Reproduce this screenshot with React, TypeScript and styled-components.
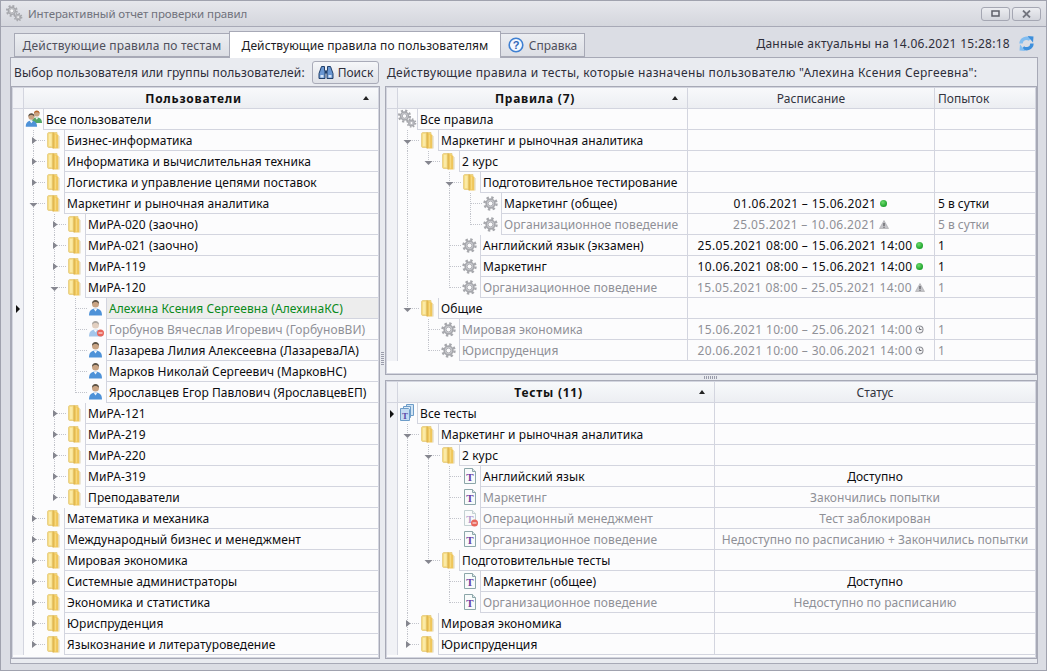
import React from "react";
import styled, { createGlobalStyle } from "styled-components";

const Global = createGlobalStyle`
  html, body { margin: 0; padding: 0; background: #d9dbe2; }
  body { font-family: "Noto Sans", "Liberation Sans", sans-serif; font-size: 12px; }
  * { box-sizing: border-box; }
`;

const LINE = "#d3d5df";
const EDGE = "#a7a9b6";

const Window = styled.div`
  width: 1047px; height: 671px; display: flex; flex-direction: column;
  background: #dbdde4; border: 1px solid #a0a2ae; overflow: hidden;
`;
const TitleBar = styled.div`
  height: 26px; flex: none; display: flex; align-items: center; padding: 0 5px 0 5px;
  background: linear-gradient(#e6e7ec, #d4d6dd); border-bottom: 1px solid #a7a9b6;
`;
const TitleText = styled.div`margin-left: 5px; color: #70727c; flex: 1; white-space: nowrap; font-size: 11.5px; letter-spacing: -0.1px;`;
const WinButton = styled.div`
  width: 29px; height: 14px; margin-left: 2px; display: flex; align-items: center; justify-content: center;
  border: 1px solid #a5a7b3; border-radius: 3px; background: linear-gradient(#ecedf1, #d3d5dc);
`;
const Body = styled.div`flex: 1; display: flex; flex-direction: column; padding: 0 8px 6px 9px; min-height: 0;`;
const TabRow = styled.div`height: 30px; flex: none; display: flex; align-items: flex-end; padding-left: 4px; position: relative; z-index: 1;`;
const Tab = styled.div<{ $active?: boolean; $w: number; $ls: number }>`
  width: ${p => p.$w}px; height: ${p => (p.$active ? 27 : 24)}px; letter-spacing: ${p => p.$ls}px;
  margin-bottom: ${p => (p.$active ? -1 : 0)}px; margin-left: ${p => (p.$active ? -1 : 0)}px;
  display: flex; align-items: center; justify-content: center; gap: 5px; white-space: nowrap;
  color: ${p => (p.$active ? "#1c1c24" : "#4f505c")};
  border: 1px solid ${EDGE}; border-bottom: ${p => (p.$active ? "none" : `1px solid ${EDGE}`)};
  border-left: ${p => (p.$active || p.$w > 100 ? `1px solid ${EDGE}` : "none")};
  background: ${p => (p.$active ? "#fff" : "linear-gradient(#eceef2, #dcdee4)")};
`;
const Fresh = styled.div`margin-left: auto; display: flex; align-items: center; gap: 9px; height: 28px; padding-right: 4px; color: #2e2e3a; white-space: nowrap; letter-spacing: 0.28px;`;
const Panel = styled.div`
  flex: 1; min-height: 0; display: flex; border: 1px solid ${EDGE};
  background: #e9ebf0; padding-bottom: 4px;
`;
const Column = styled.div<{ $w: number }>`width: ${p => p.$w}px; flex: none; display: flex; flex-direction: column; min-height: 0;`;
const VSplit = styled.div`width: 5px; flex: none; display: flex; align-items: center; justify-content: center;`;
const VGrip = styled.div`width: 3px; height: 14px; background: repeating-linear-gradient(#9a9caa 0 1px, transparent 1px 2px);`;
const HSplit = styled.div`height: 5px; flex: none; display: flex; align-items: center; justify-content: center;`;
const HGrip = styled.div`width: 14px; height: 3px; background: repeating-linear-gradient(90deg, #9a9caa 0 1px, transparent 1px 2px);`;
const LabelRow = styled.div`height: 28px; flex: none; display: flex; align-items: center; padding-left: 3px; color: #2e2e3a; white-space: nowrap; letter-spacing: 0.11px;`;
const RightLabel = styled(LabelRow)`padding-left: 2px; letter-spacing: 0.34px;`;
const SearchButton = styled.div`
  width: 67px; height: 23px; margin-left: auto; margin-right: 1px; margin-top: 1px; display: flex; align-items: center; justify-content: center; gap: 4px;
  border: 1px solid #a9abb8; border-radius: 3px; background: linear-gradient(#f6f7f9, #dfe1e7); color: #2e2e3a; letter-spacing: 0;
`;
const Grid = styled.div<{ $h?: number }>`
  ${p => (p.$h ? `height: ${p.$h}px; flex: none;` : "flex: 1;")} min-height: 0;
  border: 1px solid ${EDGE}; display: flex;
`;
const GridInner = styled.div`flex: 1; min-width: 0; border: 1px solid ${LINE}; background: #fcfcfd; display: flex; flex-direction: column; overflow: hidden;`;
const HeaderRow = styled.div`height: 21px; flex: none; display: flex; background: linear-gradient(#f8f9fb, #eceef2); border-bottom: 1px solid ${LINE};`;
const Indicator = styled.div`
  width: 11px; flex: none; display: flex; align-items: center; justify-content: center;
  background: #f1f2f6; border-right: 1px solid ${LINE};
`;
const RowMark = styled.div`width: 0; height: 0; border-left: 4px solid #111; border-top: 4px solid transparent; border-bottom: 4px solid transparent;`;
const HeaderMain = styled.div`flex: 1; min-width: 0; display: flex; align-items: center; padding-right: 9px; font-weight: 700; color: #111; letter-spacing: 0.75px;`;
const HeaderTitle = styled.div`flex: 1; text-align: center;`;
const SortMark = styled.div`width: 0; height: 0; border-left: 3.5px solid transparent; border-right: 3.5px solid transparent; border-bottom: 4px solid #222;`;
const HeaderCol = styled.div<{ $w: number; $left?: boolean }>`
  width: ${p => p.$w}px; flex: none; border-left: 1px solid ${LINE}; display: flex; align-items: center;
  justify-content: ${p => (p.$left ? "flex-start" : "center")}; padding-left: ${p => (p.$left ? 3 : 0)}px; color: #33343f;
`;
const Row = styled.div`height: 21px; flex: none; display: flex;`;
const Gutter = styled.svg`flex: none; display: block;`;
const MainCell = styled.div<{ $tone?: string; $selected?: boolean }>`
  flex: 1; min-width: 0; display: flex; align-items: center; padding-left: 2px; white-space: nowrap; letter-spacing: 0.08px;
  border-left: 1px solid ${LINE}; border-bottom: 1px solid ${LINE};
  background: ${p => (p.$selected ? "#ededed" : "transparent")};
  color: ${p => (p.$tone === "dim" ? "#8f9097" : p.$tone === "green" ? "#0a8a1a" : "#0c0c10")};
`;
const ExtraCell = styled.div<{ $w: number; $left?: boolean; $dim?: boolean; $ls?: number }>`
  width: ${p => p.$w}px; flex: none; display: flex; align-items: center; gap: 3px; white-space: nowrap;
  letter-spacing: ${p => p.$ls ?? 0}px;
  justify-content: ${p => (p.$left ? "flex-start" : "center")}; padding-left: ${p => (p.$left ? 3 : 0)}px;
  border-left: 1px solid ${LINE}; border-bottom: 1px solid ${LINE};
  color: ${p => (p.$dim ? "#8f9097" : "#0c0c10")};
`;

/* ---------- icons ---------- */
const Folder = () => (
  <g>
    <path d="M2.500 4q0-1.500 1.500-1.500h8v15H4q-1.500 0-1.500-1.500z" fill="#f6dc84" stroke="#e4ca7c" strokeWidth=".8" />
    <path d="M4 4h2.500v12H4z" fill="#fbeaa6" />
    <path d="M8 2.500l5.500 2.500v13.500H8z" fill="#efc65c" />
    <path d="M8 2.500v16" stroke="#d4a843" strokeWidth=".9" />
    <path d="M10.500 4.500v13" stroke="#f7d97e" strokeWidth="1.200" />
    <path d="M14 6v12.500" stroke="#ddd2b2" />
  </g>
);
const PersonShape = ({ hair = "#5c5347", body = "#4e92d8" }: { hair?: string; body?: string }) => (
  <g>
    <path d="M2 17.500c0-5 2.500-7 6.500-7s6.500 2 6.500 7z" fill={body} />
    <path d="M6.500 10.500l2 3 2-3z" fill="#f2f6fb" />
    <circle cx="8.500" cy="6" r="3.500" fill="#c9a484" />
    <path d="M5 6c0-3 1.500-4 3.500-4S12 3 12 6c-1-1.500-2-2-3.500-2S6 4.500 5 6z" fill={hair} />
  </g>
);
const Person = () => <PersonShape />;
const Blocked = () => (
  <g>
    <g opacity="0.5"><PersonShape /></g>
    <circle cx="13.500" cy="14" r="3.500" fill="#e8665c" />
    <path d="M11.500 13.500h4v1h-4z" fill="#fff" />
  </g>
);
const Group = () => (
  <g>
    <g transform="translate(6 0) scale(.8)"><PersonShape hair="#b4672c" body="#54a868" /></g>
    <g transform="translate(0 2.500) scale(.87)"><PersonShape /></g>
  </g>
);
const GearAt = ({ x, y, r, color = "#a6a7ac" }: { x: number; y: number; r: number; color?: string }) => {
  const c = 2 * Math.PI * r;
  return (
    <g>
      <circle cx={x} cy={y} r={r} fill="none" stroke={color} strokeWidth={r * 0.4} strokeDasharray={`${c / 16} ${c / 16}`} />
      <circle cx={x} cy={y} r={r * 0.72} fill="#cfd0d4" stroke={color} strokeWidth={r * 0.28} />
      <circle cx={x} cy={y} r={r * 0.4} fill="#fafafb" stroke="#96979d" strokeWidth="0.7" />
    </g>
  );
};
const Gear = () => <GearAt x={8.500} y={10.500} r={6} />;
const Gears = () => (
  <g>
    <GearAt x={6.500} y={7} r={5.500} />
    <GearAt x={13.500} y={14} r={4} />
  </g>
);
const Doc = ({ faded }: { faded?: boolean }) => (
  <g opacity={faded ? 0.5 : 1}>
    <path d="M3.500 2.500h8l3 3v12h-11z" fill="#f8fbfb" stroke="#8ca6a9" />
    <path d="M11.500 2.500v3h3" fill="#dde8ea" stroke="#8ca6a9" />
    <text x="9" y="14.500" textAnchor="middle" fontFamily="Liberation Serif, serif" fontWeight="700" fontSize="11" fill="#6a3fa3">T</text>
  </g>
);
const DocBlocked = () => (
  <g>
    <Doc faded />
    <circle cx="13.500" cy="15" r="3.500" fill="#e8665c" />
    <path d="M11.500 14.500h4v1h-4z" fill="#fff" />
  </g>
);
const Docs = () => (
  <g>
    <path d="M8.500 1.500h7v11h-7z" fill="#cfe3f4" stroke="#6d9cc8" />
    <path d="M5.500 3.500h7v11h-7z" fill="#dcebf7" stroke="#6d9cc8" />
    <path d="M2.500 5.500h8l1 1v11h-9z" fill="#c4dcf2" stroke="#6d9cc8" />
    <text x="7" y="15.500" textAnchor="middle" fontFamily="Liberation Serif, serif" fontWeight="700" fontSize="9" fill="#5a4aa8">T</text>
  </g>
);
const icons = { folder: Folder, person: Person, blocked: Blocked, group: Group, gear: Gear, gears: Gears, doc: () => <Doc />, docBlocked: DocBlocked, docs: Docs };
type IconName = keyof typeof icons;

const DotSvg = styled.svg`flex: none; display: block;`;
const StatusDot = () => (
  <DotSvg width="9" height="9" viewBox="0 0 9 9">
    <defs><radialGradient id="gd" cx=".4" cy=".35" r=".7"><stop offset="0" stopColor="#6fdc6f" /><stop offset="1" stopColor="#129a22" /></radialGradient></defs>
    <circle cx="4.500" cy="4.500" r="3.500" fill="url(#gd)" />
  </DotSvg>
);
const StatusWarn = () => (
  <DotSvg width="10" height="9" viewBox="0 0 10 9">
    <path d="M5 0.500L9.500 8.500H.5z" fill="#c4c4c8" stroke="#a4a4a9" strokeWidth=".6" />
    <path d="M4.500 3h1v3h-1zM4.500 6.800h1v1h-1z" fill="#3f3f44" />
  </DotSvg>
);
const StatusClock = () => (
  <DotSvg width="9" height="9" viewBox="0 0 9 9">
    <circle cx="4.500" cy="4.500" r="3.500" fill="#f4f4f5" stroke="#8f9096" strokeWidth="1.100" />
    <path d="M4.500 2.500v2h2" fill="none" stroke="#66676d" />
  </DotSvg>
);

/* ---------- tree ---------- */
type Status = "ok" | "warn" | "clock";
type TNode = {
  t: string; i: IconName; tone?: "dim" | "green"; closed?: boolean; mark?: boolean; selected?: boolean;
  sched?: string; st?: Status; tries?: string; status?: string; kids?: TNode[];
};
type Flat = { n: TNode; level: number; cont: boolean[]; hasNext: boolean };

function flatten(nodes: TNode[], level: number, cont: boolean[], out: Flat[] = []): Flat[] {
  nodes.forEach((n, idx) => {
    const hasNext = idx < nodes.length - 1;
    out.push({ n, level, cont, hasNext });
    if (n.kids) flatten(n.kids, level + 1, [...cont, level > 0 && hasNext], out);
  });
  return out;
}

const DOTS = "#c2c4cb";
function TreeGutter({ f }: { f: Flat }) {
  const { n, level, cont, hasNext } = f;
  const w = 19 + 21 * level;
  const Icon = icons[n.i];
  const x = 9.5 + 21 * (level - 1);
  const expandable = !!n.kids || n.closed;
  return (
    <Gutter width={w} height={21} viewBox={`0 0 ${w} 21`}>
      {cont.map((c, i) => c && i > 0 ? (
        <path key={i} d={`M${9.5 + 21 * (i - 1)} 0V21`} stroke={DOTS} strokeDasharray="1 1" fill="none" shapeRendering="crispEdges" />
      ) : null)}
      {level > 0 && (
        <g shapeRendering="crispEdges" fill="none" stroke={DOTS} strokeDasharray="1 1">
          <path d={`M${x} 0V${hasNext ? 21 : 10.5}`} />
          <path d={`M${x} 10.5H${x + 12}`} />
        </g>
      )}
      {level > 0 && expandable && (n.closed
        ? <path d={`M${x - 1.500} 7l4.500 3.500-4.500 3.500z`} fill="#85868f" />
        : <path d={`M${x - 4} 10h8l-4 4z`} fill="#85868f" />)}
      <g transform={`translate(${21 * level} 0)`}><Icon /></g>
    </Gutter>
  );
}

const statusIcon = (s?: Status) => s === "ok" ? <StatusDot /> : s === "warn" ? <StatusWarn /> : s === "clock" ? <StatusClock /> : null;

const usersTree: TNode[] = [{
  t: "Все пользователи", i: "group", kids: [
    { t: "Бизнес-информатика", i: "folder", closed: true },
    { t: "Информатика и вычислительная техника", i: "folder", closed: true },
    { t: "Логистика и управление цепями поставок", i: "folder", closed: true },
    { t: "Маркетинг и рыночная аналитика", i: "folder", kids: [
      { t: "МиРА-020 (заочно)", i: "folder", closed: true },
      { t: "МиРА-021 (заочно)", i: "folder", closed: true },
      { t: "МиРА-119", i: "folder", closed: true },
      { t: "МиРА-120", i: "folder", kids: [
        { t: "Алехина Ксения Сергеевна (АлехинаКС)", i: "person", tone: "green", mark: true, selected: true },
        { t: "Горбунов Вячеслав Игоревич (ГорбуновВИ)", i: "blocked", tone: "dim" },
        { t: "Лазарева Лилия Алексеевна (ЛазареваЛА)", i: "person" },
        { t: "Марков Николай Сергеевич (МарковНС)", i: "person" },
        { t: "Ярославцев Егор Павлович (ЯрославцевЕП)", i: "person" },
      ] },
      { t: "МиРА-121", i: "folder", closed: true },
      { t: "МиРА-219", i: "folder", closed: true },
      { t: "МиРА-220", i: "folder", closed: true },
      { t: "МиРА-319", i: "folder", closed: true },
      { t: "Преподаватели", i: "folder", closed: true },
    ] },
    { t: "Математика и механика", i: "folder", closed: true },
    { t: "Международный бизнес и менеджмент", i: "folder", closed: true },
    { t: "Мировая экономика", i: "folder", closed: true },
    { t: "Системные администраторы", i: "folder", closed: true },
    { t: "Экономика и статистика", i: "folder", closed: true },
    { t: "Юриспруденция", i: "folder", closed: true },
    { t: "Языкознание и литературоведение", i: "folder", closed: true },
  ],
}];

const rulesTree: TNode[] = [{
  t: "Все правила", i: "gears", kids: [
    { t: "Маркетинг и рыночная аналитика", i: "folder", kids: [
      { t: "2 курс", i: "folder", kids: [
        { t: "Подготовительное тестирование", i: "folder", kids: [
          { t: "Маркетинг (общее)", i: "gear", sched: "01.06.2021 – 15.06.2021", st: "ok", tries: "5 в сутки" },
          { t: "Организационное поведение", i: "gear", tone: "dim", sched: "25.05.2021 – 10.06.2021", st: "warn", tries: "5 в сутки" },
        ] },
        { t: "Английский язык (экзамен)", i: "gear", sched: "25.05.2021 08:00 – 15.06.2021 14:00", st: "ok", tries: "1" },
        { t: "Маркетинг", i: "gear", sched: "10.06.2021 08:00 – 15.06.2021 14:00", st: "ok", tries: "1" },
        { t: "Организационное поведение", i: "gear", tone: "dim", sched: "15.05.2021 08:00 – 25.05.2021 14:00", st: "warn", tries: "1" },
      ] },
    ] },
    { t: "Общие", i: "folder", kids: [
      { t: "Мировая экономика", i: "gear", tone: "dim", sched: "15.06.2021 10:00 – 25.06.2021 14:00", st: "clock", tries: "1" },
      { t: "Юриспруденция", i: "gear", tone: "dim", sched: "20.06.2021 10:00 – 30.06.2021 14:00", st: "clock", tries: "1" },
    ] },
  ],
}];

const testsTree: TNode[] = [{
  t: "Все тесты", i: "docs", mark: true, kids: [
    { t: "Маркетинг и рыночная аналитика", i: "folder", kids: [
      { t: "2 курс", i: "folder", kids: [
        { t: "Английский язык", i: "doc", status: "Доступно" },
        { t: "Маркетинг", i: "doc", tone: "dim", status: "Закончились попытки" },
        { t: "Операционный менеджмент", i: "docBlocked", tone: "dim", status: "Тест заблокирован" },
        { t: "Организационное поведение", i: "doc", tone: "dim", status: "Недоступно по расписанию + Закончились попытки" },
      ] },
      { t: "Подготовительные тесты", i: "folder", kids: [
        { t: "Маркетинг (общее)", i: "doc", status: "Доступно" },
        { t: "Организационное поведение", i: "doc", tone: "dim", status: "Недоступно по расписанию" },
      ] },
    ] },
    { t: "Мировая экономика", i: "folder", closed: true },
    { t: "Юриспруденция", i: "folder", closed: true },
  ],
}];

function TreeRows({ tree, mode }: { tree: TNode[]; mode: "users" | "rules" | "tests" }) {
  const rows = flatten(tree, 0, []);
  return (
    <>
      {rows.map((f, i) => (
        <Row key={i}>
          <Indicator>{f.n.mark && <RowMark />}</Indicator>
          <TreeGutter f={f} />
          <MainCell $tone={f.n.tone} $selected={f.n.selected}>{f.n.t}</MainCell>
          {mode === "rules" && (
            <>
              <ExtraCell $w={247} $ls={0.35} $dim={f.n.tone === "dim"}>{f.n.sched}{statusIcon(f.n.st)}</ExtraCell>
              <ExtraCell $w={101} $left $dim={f.n.tone === "dim"}>{f.n.tries}</ExtraCell>
            </>
          )}
          {mode === "tests" && <ExtraCell $w={321} $ls={0.06} $dim={f.n.tone === "dim"}>{f.n.status}</ExtraCell>}
        </Row>
      ))}
    </>
  );
}

const IconSvg = styled.svg`flex: none; display: block;`;

export default function App() {
  return (
    <Window>
      <Global />
      <TitleBar>
        <IconSvg width="17" height="17" viewBox="0.500 0.500 18 19"><Gears /></IconSvg>
        <TitleText>Интерактивный отчет проверки правил</TitleText>
        <WinButton>
          <IconSvg width="9" height="7" viewBox="0 0 9 7"><path d="M1 1h7v5H1z" fill="none" stroke="#5d5f68" strokeWidth="1.500" /></IconSvg>
        </WinButton>
        <WinButton>
          <IconSvg width="9" height="8" viewBox="0 0 9 8"><path d="M1 .5l7 7M8 .5l-7 7" stroke="#74767f" strokeWidth="1.800" /></IconSvg>
        </WinButton>
      </TitleBar>
      <Body>
        <TabRow>
          <Tab $w={216} $ls={0.17}>Действующие правила по тестам</Tab>
          <Tab $active $w={272} $ls={0.08}>Действующие правила по пользователям</Tab>
          <Tab $w={84} $ls={0}>
            <IconSvg width="16" height="16" viewBox="0 0 16 16">
              <circle cx="8" cy="8" r="6.800" fill="#f4f8fe" stroke="#3f80d2" strokeWidth="1.600" />
              <text x="8" y="12" textAnchor="middle" fontFamily="Liberation Sans, sans-serif" fontWeight="700" fontSize="11" fill="#2f66b8">?</text>
            </IconSvg>
            Справка
          </Tab>
          <Fresh>
            Данные актуальны на 14.06.2021 15:28:18
            <IconSvg width="15" height="15" viewBox="0 0 15 15">
              <path d="M2 7.500a5.500 5.500 0 0 1 9-4" fill="none" stroke="#82bdf0" strokeWidth="3.400" />
              <path d="M8.500 0l6 .5-.5 6z" fill="#3d8fdc" />
              <path d="M13 7.500a5.500 5.500 0 0 1-9 4" fill="none" stroke="#3d8fdc" strokeWidth="3.400" />
              <path d="M6.500 15l-6-.5.5-6z" fill="#82bdf0" />
            </IconSvg>
          </Fresh>
        </TabRow>
        <Panel>
          <Column $w={369}>
            <LabelRow>
              Выбор пользователя или группы пользователей:
              <SearchButton>
                <IconSvg width="16" height="15" viewBox="0 0 16 15">
                  <path d="M3.500 1.500h3v4h.5v8h-6v-5z" fill="#6a97d2" stroke="#22406b" strokeLinejoin="round" />
                  <path d="M12.500 1.500h-3v4H9v8h6v-5z" fill="#6a97d2" stroke="#22406b" strokeLinejoin="round" />
                  <path d="M7 5.500h2v3H7z" fill="#22406b" />
                  <path d="M2.500 10h3v2.500h-3zM10.500 10h3v2.500h-3z" fill="#d6e5f8" />
                </IconSvg>
                Поиск
              </SearchButton>
            </LabelRow>
            <Grid>
              <GridInner>
                <HeaderRow>
                  <Indicator />
                  <HeaderMain><HeaderTitle>Пользователи</HeaderTitle><SortMark /></HeaderMain>
                </HeaderRow>
                <TreeRows tree={usersTree} mode="users" />
              </GridInner>
            </Grid>
          </Column>
          <VSplit><VGrip /></VSplit>
          <Column $w={652}>
            <RightLabel>Действующие правила и тесты, которые назначены пользователю "Алехина Ксения Сергеевна":</RightLabel>
            <Grid $h={289}>
              <GridInner>
                <HeaderRow>
                  <Indicator />
                  <HeaderMain><HeaderTitle>Правила (7)</HeaderTitle><SortMark /></HeaderMain>
                  <HeaderCol $w={247}>Расписание</HeaderCol>
                  <HeaderCol $w={101} $left>Попыток</HeaderCol>
                </HeaderRow>
                <TreeRows tree={rulesTree} mode="rules" />
              </GridInner>
            </Grid>
            <HSplit><HGrip /></HSplit>
            <Grid>
              <GridInner>
                <HeaderRow>
                  <Indicator />
                  <HeaderMain><HeaderTitle>Тесты (11)</HeaderTitle><SortMark /></HeaderMain>
                  <HeaderCol $w={321}>Статус</HeaderCol>
                </HeaderRow>
                <TreeRows tree={testsTree} mode="tests" />
              </GridInner>
            </Grid>
          </Column>
        </Panel>
      </Body>
    </Window>
  );
}
